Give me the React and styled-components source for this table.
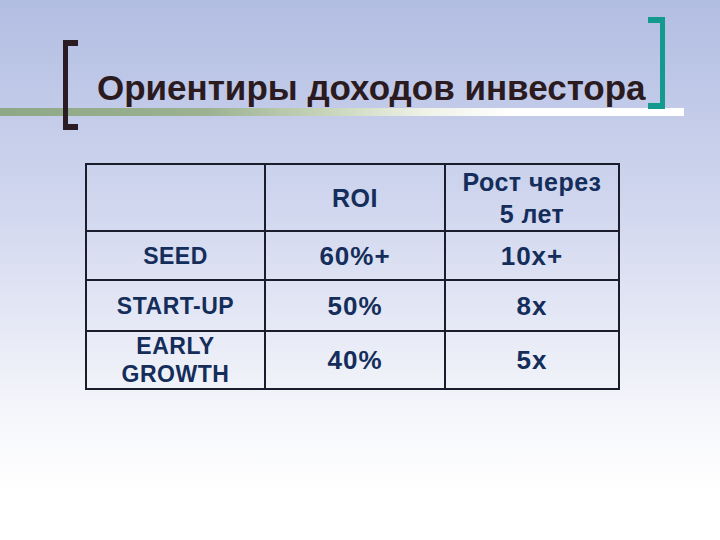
import React from 'react';
import styled, { createGlobalStyle } from 'styled-components';

const GlobalStyle = createGlobalStyle`
  html, body {
    margin: 0;
    padding: 0;
  }
  body {
    font-family: "Liberation Sans", Arial, sans-serif;
  }
`;

// --- Slide ---
const Slide = styled.div`
  width: 720px;
  height: 540px;
  overflow: hidden;
  background: linear-gradient(to bottom, #b2bde2 0%, #d2d8ef 40%, #f4f5fa 75%, #ffffff 92%, #ffffff 100%);
`;

const Header = styled.header`
  position: relative;
  display: flex;
  align-items: flex-start;
  height: 140px;
  padding-left: 63px;
  box-sizing: border-box;
`;

// green-to-white rule under the title
const Rule = styled.div`
  position: absolute;
  left: 0;
  top: 108px;
  width: 684px;
  height: 8px;
  background: linear-gradient(to right, #8ea887 0%, #9bb192 30%, #c8d5bb 48%, #eef2e6 62%, #ffffff 75%, #ffffff 100%);
`;

const Bracket = styled.span`
  position: relative;
  z-index: 1;
  display: block;
  box-sizing: border-box;
  flex: none;
  width: ${p => p.$w}px;
  height: ${p => p.$h}px;
  margin-top: ${p => p.$top}px;
  margin-left: ${p => p.$ml || 0}px;
  border: 0 solid ${p => p.$color};
  border-top-width: 6px;
  border-bottom-width: 6px;
  ${p => (p.$side === 'left' ? 'border-left-width: 5px;' : 'border-right-width: 5px;')}
`;

const Title = styled.h1`
  margin: 70px 0 0 19px;
  font-size: 35px;
  line-height: 35px;
  font-weight: bold;
  color: #2b1b1f;
  white-space: nowrap;
`;

// --- Table ---
const Table = styled.table`
  margin: 23px 0 0 85px;
  width: 535px;
  border-collapse: collapse;
  color: #142d5a;
  font-weight: bold;
  text-align: center;
`;

const Cell = styled.td`
  border: 2px solid #1b1c2c;
  padding: 0;
  height: ${p => p.$h}px;
  width: ${p => p.$w || 'auto'};
  font-size: ${p => p.$size || 24}px;
  line-height: ${p => p.$lh || 30}px;
  letter-spacing: ${p => p.$ls || 0}px;
  vertical-align: middle;
`;

const rows = [
  { label: 'SEED', roi: '60%+', growth: '10x+', h: 47 },
  { label: 'START-UP', roi: '50%', growth: '8x', h: 49 },
  { label: ['EARLY', 'GROWTH'], roi: '40%', growth: '5x', h: 56 },
];

export default function App() {
  return (
    <>
      <GlobalStyle />
      <Slide>
        <Header>
          <Rule />
          <Bracket $side="left" $color="#2b1b22" $w={15} $h={90} $top={40} />
          <Title>Ориентиры доходов инвестора</Title>
          <Bracket $side="right" $color="#14998f" $w={17} $h={92} $top={17} $ml={2} />
        </Header>

        <Table>
          <tbody>
            <tr>
              <Cell $h={65} $w="177px" />
              <Cell $h={65} $w="178px" $size={25} $ls={0.5}>ROI</Cell>
              <Cell $h={65} $size={25} $lh={32} $ls={0.5}>
                Рост через
                <br />
                5 лет
              </Cell>
            </tr>
            {rows.map(r => (
              <tr key={r.roi}>
                <Cell $h={r.h} $size={23} $lh={28} $ls={0.5}>
                  {Array.isArray(r.label) ? (
                    <>
                      {r.label[0]}
                      <br />
                      {r.label[1]}
                    </>
                  ) : (
                    r.label
                  )}
                </Cell>
                <Cell $h={r.h} $size={26} $ls={1}>{r.roi}</Cell>
                <Cell $h={r.h} $size={26} $ls={1}>{r.growth}</Cell>
              </tr>
            ))}
          </tbody>
        </Table>
      </Slide>
    </>
  );
}
